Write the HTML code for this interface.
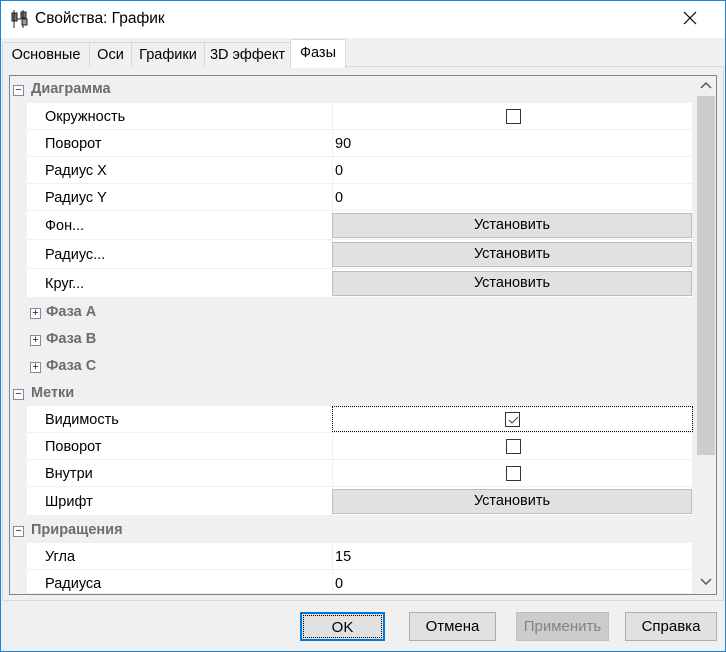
<!DOCTYPE html><html><head><meta charset="utf-8"><style>
*{margin:0;padding:0;box-sizing:border-box}
body{width:726px;height:652px;position:relative;background:#f0f0f0;font-family:"Liberation Sans",sans-serif;font-size:14.5px;color:#000;overflow:hidden}
.a{position:absolute}
.win{left:0;top:0;width:726px;height:652px;border:1px solid #1883d7}
.title{left:1px;top:1px;width:724px;height:37px;background:#fff}
.tab{top:42px;height:25px;border:1px solid #d9d9d9;border-bottom:none;background:#f0f0f0;padding:4px 0 0 0;text-align:center;font-size:14.5px}
.row{left:27px;width:665px;background:#fff;border-bottom:1px solid #f0f0f0}
.name{left:18px;top:0}
.val{left:305px;top:0;width:360px;height:100%;border-left:1px solid #f0f0f0}
.hdr{left:10px;width:684px;font-weight:bold;color:#6d6d6d}
.btn{left:332px;width:360px;height:25px;background:#e1e1e1;border:1px solid #adadadb0;text-align:center;line-height:23px}
.cb{width:15px;height:15px;border:1px solid #333;background:#fff}
.bb{top:612px;height:29px;background:#e1e1e1;border:1px solid #adadad;text-align:center;line-height:27px;font-size:15px}
.pm{width:11px;height:11px;border:1px solid #7f8aa0;background:#fff;font-size:11px;line-height:9px;text-align:center;color:#222;font-weight:normal}
</style></head><body>
<div class="a win"></div>
<div class="a title"></div>
<svg class="a" style="left:10px;top:9px" width="20" height="20" viewBox="0 0 20 20"><rect x="2" y="4" width="5" height="8" fill="#777" stroke="#222"/><rect x="11" y="3" width="5" height="6" fill="#777" stroke="#222"/><path d="M4 1v18M13 1v18M7 10h4" stroke="#222"/><rect x="12" y="10" width="5" height="6" fill="#999" stroke="#222"/></svg>
<div class="a" style="left:35px;top:10px;font-size:15.5px">Свойства: График</div>
<svg class="a" style="left:683px;top:11px" width="14" height="14"><path d="M1 1L13 13M13 1L1 13" stroke="#000" stroke-width="1.2"/></svg>
<div class="a" style="left:2px;top:66px;width:722px;height:535px;border:1px solid #d9d9d9;background:#f0f0f0"></div>
<div class="a tab" style="left:2px;width:88px">Основные</div>
<div class="a tab" style="left:89px;width:43px">Оси</div>
<div class="a tab" style="left:131px;width:74px">Графики</div>
<div class="a tab" style="left:204px;width:87px">3D эффект</div>
<div class="a tab" style="left:290px;top:39px;height:29px;width:56px;background:#fff;padding-top:5px">Фазы</div>
<div class="a" style="left:9px;top:75px;width:708px;height:520px;border:1px solid #82828c;background:#f0f0f0"></div>

<div class="a hdr" style="top:81px"><span class="a pm" style="left:3px;top:4px">−</span><span style="position:absolute;left:21px">Диаграмма</span></div>
<div class="a row" style="top:103px;height:27px"><span class="a name" style="top:6px">Окружность</span><div class="a val"><div class="a cb" style="left:173px;top:6px"></div></div></div>
<div class="a row" style="top:130px;height:27px"><span class="a name" style="top:6px">Поворот</span><div class="a val"><span class="a" style="left:2px;top:6px">90</span></div></div>
<div class="a row" style="top:157px;height:27px"><span class="a name" style="top:6px">Радиус X</span><div class="a val"><span class="a" style="left:2px;top:6px">0</span></div></div>
<div class="a row" style="top:184px;height:27px"><span class="a name" style="top:6px">Радиус Y</span><div class="a val"><span class="a" style="left:2px;top:6px">0</span></div></div>
<div class="a row" style="top:211px;height:29px"><span class="a name" style="top:7px">Фон...</span><div class="a val"></div></div>
<div class="a row" style="top:240px;height:29px"><span class="a name" style="top:7px">Радиус...</span><div class="a val"></div></div>
<div class="a row" style="top:269px;height:29px"><span class="a name" style="top:7px">Круг...</span><div class="a val"></div></div>
<div class="a btn" style="top:213px">Установить</div>
<div class="a btn" style="top:242px">Установить</div>
<div class="a btn" style="top:271px">Установить</div>

<div class="a hdr" style="top:304px"><span class="a pm" style="left:20px;top:4px">+</span><span style="position:absolute;left:36px">Фаза A</span></div>
<div class="a hdr" style="top:331px"><span class="a pm" style="left:20px;top:4px">+</span><span style="position:absolute;left:36px">Фаза B</span></div>
<div class="a hdr" style="top:358px"><span class="a pm" style="left:20px;top:4px">+</span><span style="position:absolute;left:36px">Фаза C</span></div>
<div class="a hdr" style="top:385px"><span class="a pm" style="left:3px;top:4px">−</span><span style="position:absolute;left:21px">Метки</span></div>

<div class="a row" style="top:406px;height:27px"><span class="a name" style="top:6px">Видимость</span><div class="a val" style="border:1px dotted #000;left:305px;width:361px"><div class="a cb" style="left:172px;top:5px"><svg class="a" style="left:1px;top:1px" width="12" height="12"><path d="M2 6l3 3 6-6" stroke="#444" fill="none"/></svg></div></div></div>
<div class="a row" style="top:433px;height:27px"><span class="a name" style="top:6px">Поворот</span><div class="a val"><div class="a cb" style="left:173px;top:6px"></div></div></div>
<div class="a row" style="top:460px;height:27px"><span class="a name" style="top:6px">Внутри</span><div class="a val"><div class="a cb" style="left:173px;top:6px"></div></div></div>
<div class="a row" style="top:487px;height:29px"><span class="a name" style="top:7px">Шрифт</span><div class="a val"></div></div>
<div class="a btn" style="top:489px">Установить</div>
<div class="a hdr" style="top:522px"><span class="a pm" style="left:3px;top:4px">−</span><span style="position:absolute;left:21px">Приращения</span></div>
<div class="a row" style="top:543px;height:27px"><span class="a name" style="top:6px">Угла</span><div class="a val"><span class="a" style="left:2px;top:6px">15</span></div></div>
<div class="a row" style="top:570px;height:24px"><span class="a name" style="top:6px">Радиуса</span><div class="a val"><span class="a" style="left:2px;top:6px">0</span></div></div>

<div class="a" style="left:696px;top:76px;width:20px;height:518px;background:#f0f0f0"></div>
<div class="a" style="left:697px;top:96px;width:18px;height:359px;background:#cdcdcd"></div>
<svg class="a" style="left:700px;top:81px" width="12" height="10"><path d="M1 7l5-5 5 5" stroke="#555" stroke-width="1.5" fill="none"/></svg>
<svg class="a" style="left:700px;top:576px" width="12" height="10"><path d="M1 3l5 5 5-5" stroke="#555" stroke-width="1.5" fill="none"/></svg>

<div class="a bb" style="left:300px;width:85px;border:2px solid #0078d7"><div style="position:absolute;inset:1px;border:1px dotted #000"></div>OK</div>
<div class="a bb" style="left:409px;width:87px">Отмена</div>
<div class="a bb" style="left:516px;width:93px;background:#cccccc;border-color:#bfbfbf;color:#838383">Применить</div>
<div class="a bb" style="left:625px;width:92px">Справка</div>
</body></html>
